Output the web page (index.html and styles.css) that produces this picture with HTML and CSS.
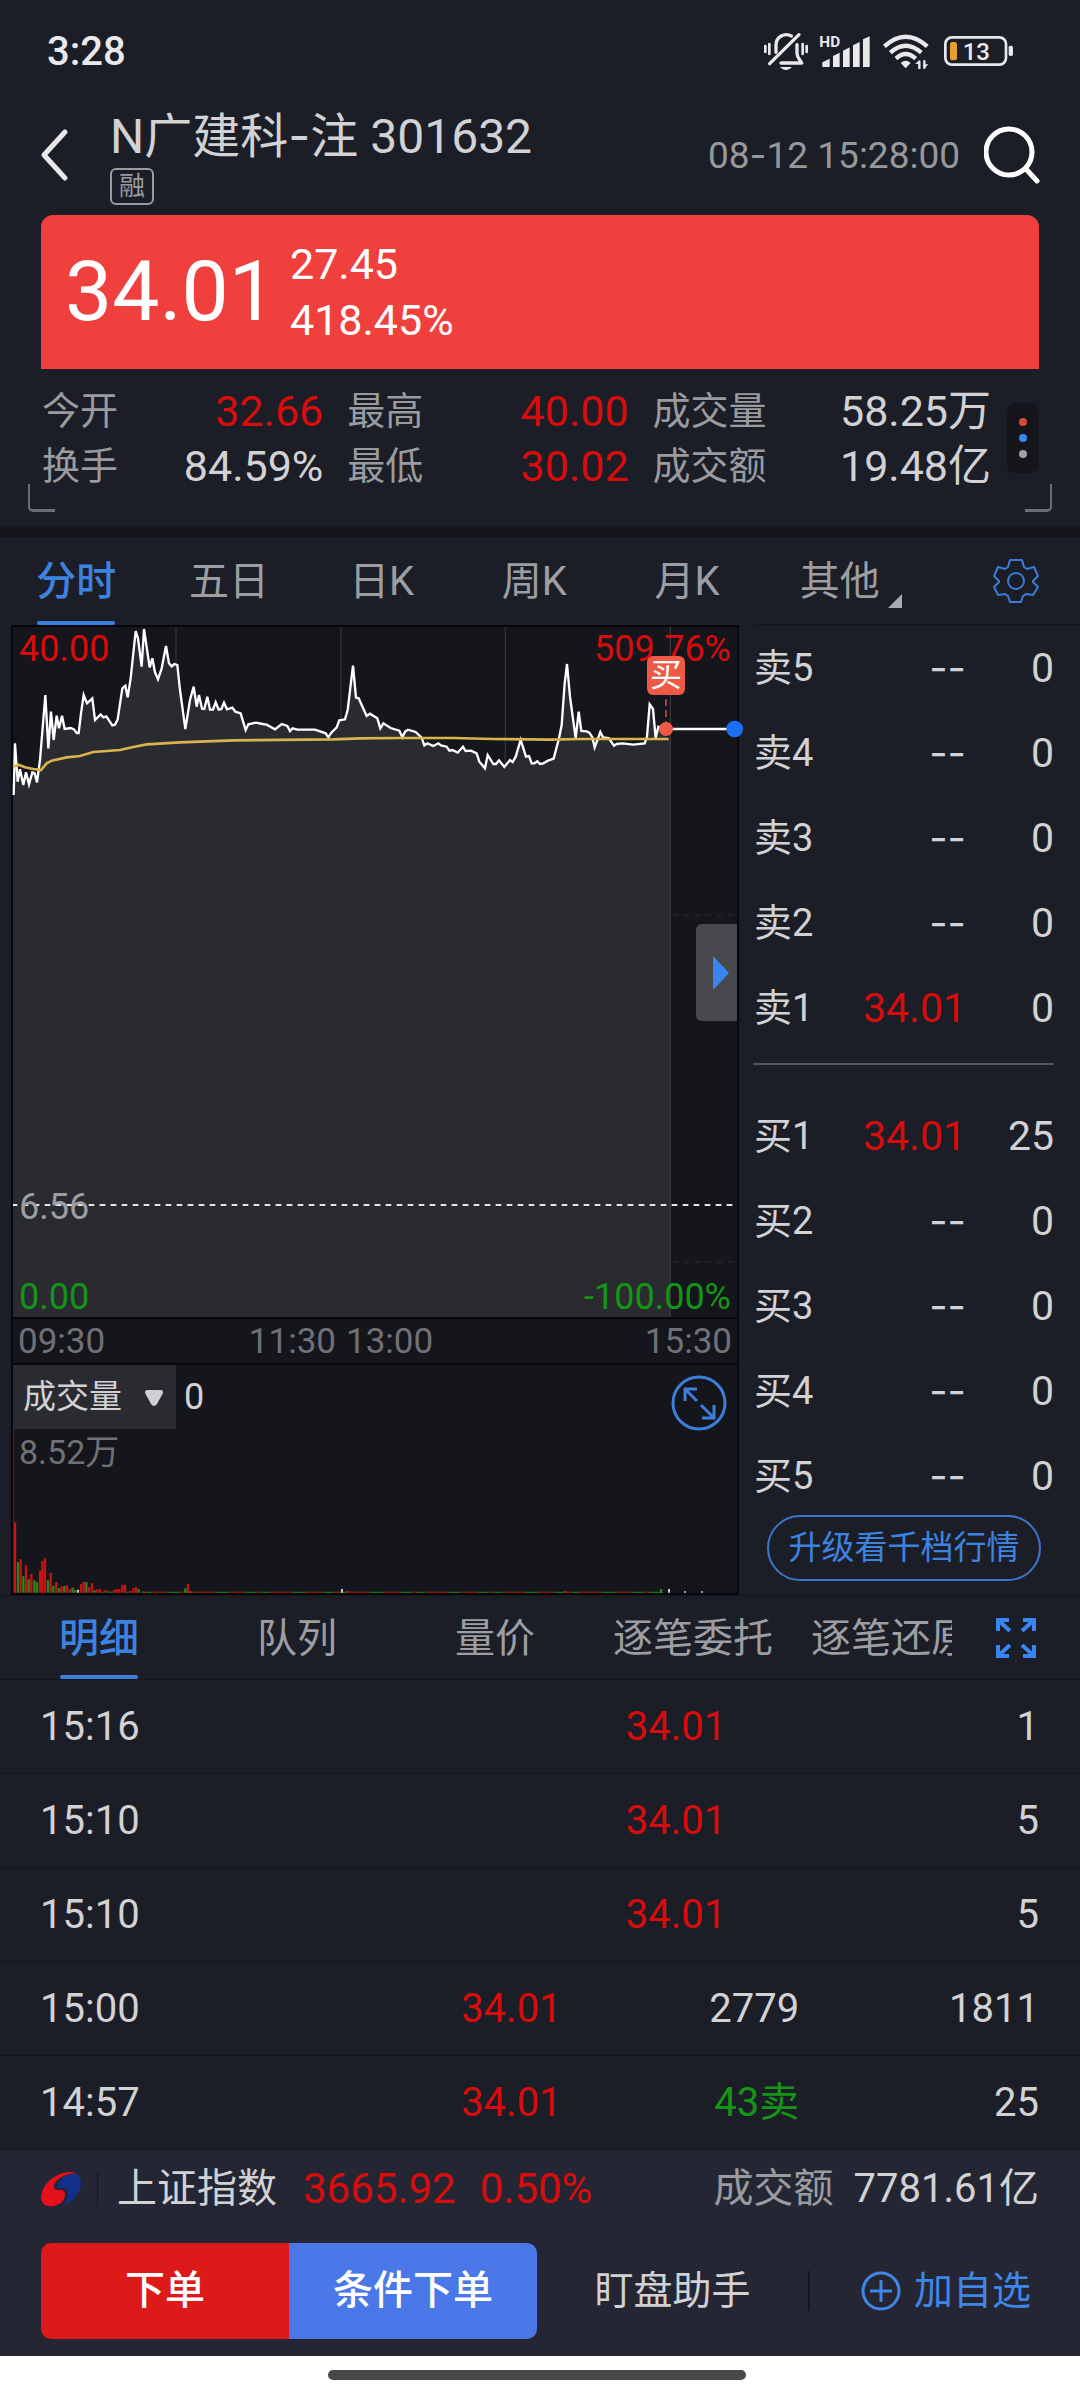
FILE: index.html
```html
<!DOCTYPE html>
<html lang="zh-CN">
<head>
<meta charset="utf-8">
<meta name="viewport" content="width=device-width, initial-scale=1">
<title>N广建科-注 301632</title>
<link rel="stylesheet" href="styles.css">
</head>
<body>
<div class="status">
  <span class="status-time">3:28</span>
  <svg class="status-icons" viewBox="45 36 750 120" aria-hidden="true">
    <g fill="none" stroke="#e9e9eb" stroke-linecap="round">
      <path d="M49 78v18M61 72v30M161 72v30M173 78v18" stroke-width="8"/>
      <path d="M62 131L150 44" stroke-width="10"/>
      <path d="M81 97V74a31 31 0 0 1 46-26M144 74v26c0 12 8 18 14 29H96" stroke-width="10" stroke-linejoin="round"/>
    </g>
    <path d="M93 141h36q-18 20-36 0z" fill="#e9e9eb"/>
    <text x="211" y="81" font-size="46" font-weight="700" fill="#e9e9eb">HD</text>
    <path d="M220 141v-14l22-11v25zM252 141v-33l20-10v43zM282 141V92l20-10v59zM312 141V76l20-10v75zM342 141V58l20-9v92z" fill="#e9e9eb"/>
    <g fill="none" stroke="#e9e9eb" stroke-width="13">
      <path d="M406 79q64-58 129 0"/>
      <path d="M424 98q46-42 93 0"/>
      <path d="M441 116q29-28 59 0"/>
      <path d="M511 122v25M526 121v25" stroke-width="7"/>
    </g>
    <path d="M455 129q15-14 30 0l-15 16zM498 132l14-12v12zM538 133l-13 13v-13z" fill="#e9e9eb"/>
    <rect x="589" y="52" width="182" height="82" rx="20" fill="none" stroke="#e9e9eb" stroke-width="8"/>
    <rect x="603" y="66" width="21" height="55" rx="7" fill="#e5a02b"/>
    <rect x="779" y="77" width="13" height="31" rx="5" fill="#e9e9eb"/>
    <text x="641" y="120" font-size="72" font-weight="500" fill="#e9e9eb">13</text>
  </svg>
</div>

<header class="head">
  <button class="icon-btn back" aria-label="返回">
    <svg width="30" height="56" viewBox="0 0 30 56"><path d="M25 5L4 28l21 23" fill="none" stroke="#e8e8ea" stroke-width="5" stroke-linecap="round" stroke-linejoin="round"/></svg>
  </button>
  <div class="head-name">
    <h1>N广建科<span class="dash">-</span>注 301632</h1>
    <span class="badge">融</span>
  </div>
  <time class="head-time">08<span class="dash">-</span>12 15:28:00</time>
  <button class="icon-btn" aria-label="搜索">
    <svg width="56" height="58" viewBox="0 0 56 58"><circle cx="25" cy="26" r="23" fill="none" stroke="#fff" stroke-width="5"/><path d="M42 43l11 12" stroke="#fff" stroke-width="5" stroke-linecap="round"/></svg>
  </button>
</header>

<section class="quote">
  <strong class="quote-price">34.01</strong>
  <div class="quote-change"><span>27.45</span><span>418.45%</span></div>
</section>

<section class="stats">
  <dl class="stats-grid">
    <div><dt>今开</dt><dd class="up">32.66</dd></div>
    <div><dt>最高</dt><dd class="up">40.00</dd></div>
    <div><dt>成交量</dt><dd>58.25万</dd></div>
    <div><dt>换手</dt><dd>84.59%</dd></div>
    <div><dt>最低</dt><dd class="up">30.02</dd></div>
    <div><dt>成交额</dt><dd>19.48亿</dd></div>
  </dl>
  <button class="more" aria-label="更多"><i class="dot dot-red"></i><i class="dot dot-blue"></i><i class="dot dot-gray"></i></button>
</section>

<nav class="tabs">
  <div class="tab-strip">
    <button class="tab active">分时</button>
    <button class="tab">五日</button>
    <button class="tab">日K</button>
    <button class="tab">周K</button>
    <button class="tab">月K</button>
    <button class="tab has-menu">其他</button>
  </div>
  <button class="icon-btn settings" aria-label="设置">
    <svg width="46" height="46" viewBox="0 0 46 46" fill="none" stroke="#3b7cd6" stroke-width="2" stroke-linejoin="round"><path d="M17 2h12l2 7 3 2 7-2 4 9-5 5 0 1 5 5-5 8-7-1-3 2-2 6H17l-2-6-3-2-7 1-4-8 5-5v-1L1 18l4-9 7 2 3-2z"/><circle cx="23" cy="23" r="8"/></svg>
  </button>
</nav>

<main class="market">
  <div class="charts">
    <div class="price-chart">
      <svg class="plot" viewBox="39 51 2172 2070" preserveAspectRatio="none" aria-hidden="true">
        <path d="M39 915H2211M39 1956H2211" stroke="#23242a" stroke-width="4" stroke-dasharray="17 16"/>
        <path d="M528 51V2121M1023 51V2121M1516 51V2121" stroke="#32333f" stroke-width="4"/>
        <path fill="#2a2b30" d="M39 2121V555L45 400 53 515 60 478 70 525 78 487 87 523 97 487 104 490 111 517 120 450 136 255 145 415 153 305 161 390 170 317 177 355 186 317 194 357 212 354 222 358 230 369 236 369 243 310 251 255 261 280 277 265 285 330 302 313 310 322 319 319 337 346 345 344 353 328 367 235 376 227 383 262 392 205 407 63 414 85 425 170 432 57 449 172 457 145 465 187 474 208 485 175 498 108 507 160 515 169 523 162 532 165 540 240 556 357 570 270 581 230 590 290 597 255 606 296 613 297 622 260 630 299 639 299 647 277 656 299 664 297 672 278 681 298 697 293 706 305 722 310 737 360 745 343 768 338 788 342 800 344 825 358 845 342 862 348 870 363 878 355 892 359 945 359 977 370 985 382 994 368 1010 352 1018 331 1035 328 1043 300 1059 167 1068 263 1076 265 1100 318 1110 311 1132 325 1141 355 1150 340 1172 354 1198 362 1207 382 1216 364 1224 359 1247 366 1265 383 1273 406 1282 400 1300 408 1315 400 1323 406 1340 410 1348 422 1357 420 1373 428 1389 410 1397 423 1413 422 1430 430 1438 455 1455 475 1463 435 1480 462 1488 462 1497 451 1513 471 1530 450 1538 456 1547 440 1562 390 1578 440 1587 438 1595 460 1603 460 1612 454 1620 462 1630 460 1644 452 1661 446 1677 385 1685 345 1694 220 1701 162 1710 260 1727 385 1736 305 1744 363 1760 364 1768 368 1777 382 1784 412 1801 366 1809 382 1826 384 1842 407 1850 402 1867 400 1900 404 1934 400 1941 380 1949 283 1959 297 1967 385 1975 350 2010 387V2121z"/>
        <path fill="none" stroke="#fff" stroke-width="7" d="M41 555L45 400 53 515 60 478 70 525 78 487 87 523 97 487 104 490 111 517 120 450 136 255 145 415 153 305 161 390 170 317 177 355 186 317 194 357 212 354 222 358 230 369 236 369 243 310 251 255 261 280 277 265 285 330 302 313 310 322 319 319 337 346 345 344 353 328 367 235 376 227 383 262 392 205 407 63 414 85 425 170 432 57 449 172 457 145 465 187 474 208 485 175 498 108 507 160 515 169 523 162 532 165 540 240 556 357 570 270 581 230 590 290 597 255 606 296 613 297 622 260 630 299 639 299 647 277 656 299 664 297 672 278 681 298 697 293 706 305 722 310 737 360 745 343 768 338 788 342 800 344 825 358 845 342 862 348 870 363 878 355 892 359 945 359 977 370 985 382 994 368 1010 352 1018 331 1035 328 1043 300 1059 167 1068 263 1076 265 1100 318 1110 311 1132 325 1141 355 1150 340 1172 354 1198 362 1207 382 1216 364 1224 359 1247 366 1265 383 1273 406 1282 400 1300 408 1315 400 1323 406 1340 410 1348 422 1357 420 1373 428 1389 410 1397 423 1413 422 1430 430 1438 455 1455 475 1463 435 1480 462 1488 462 1497 451 1513 471 1530 450 1538 456 1547 440 1562 390 1578 440 1587 438 1595 460 1603 460 1612 454 1620 462 1630 460 1644 452 1661 446 1677 385 1685 345 1694 220 1701 162 1710 260 1727 385 1736 305 1744 363 1760 364 1768 368 1777 382 1784 412 1801 366 1809 382 1826 384 1842 407 1850 402 1867 400 1900 404 1934 400 1941 380 1949 283 1959 297 1967 385 1975 350 1998 357H2204"/>
        <path d="M2011 51V2121" stroke="#36373f" stroke-width="4"/>
        <path fill="none" stroke="#d9b34c" stroke-width="8" d="M39 470L55 464 75 472 100 477 123 480 140 460 155 452 200 442 240 438 280 426 360 420 400 411 440 403 540 397 700 391 1000 388 1080 385 1200 384 1360 384 1480 387 1650 389 1740 387 2006 387"/>
        <path d="M39 1785H2211" stroke="#e6e6e8" stroke-width="6" stroke-dasharray="17 16" stroke-dashoffset="4"/>
        <path d="M1998 268V340" stroke="#c04f40" stroke-width="5" stroke-dasharray="20 13"/>
        <circle cx="1998" cy="357" r="21" fill="#ee5a45"/>
        <circle cx="2204" cy="357" r="25" fill="#1a6ff5"/>
      </svg>
      <span class="axis axis-top up">40.00</span>
      <span class="axis axis-top axis-right up">509.76%</span>
      <span class="axis axis-prev">6.56</span>
      <span class="axis axis-bottom down">0.00</span>
      <span class="axis axis-bottom axis-right down">-100.00%</span>
      <span class="buy-mark">买</span>
      <button class="drawer" aria-label="展开"><svg width="16" height="34" viewBox="0 0 16 34"><path d="M0 0l16 17L0 34z" fill="#3a86f0"/></svg></button>
    </div>
    <div class="hours">
      <div><span>09:30</span><span>11:30</span></div>
      <div><span>13:00</span><span>15:30</span></div>
    </div>
    <div class="volume">
      <svg class="plot" viewBox="15 -405 2172 684" preserveAspectRatio="none" aria-hidden="true">
        <path d="M17 -213V278" stroke="#6b1a18" stroke-width="3"/>
        <path d="M400 277H1965" stroke="#17701b" stroke-width="4"/>
        <path d="M430 277H1940" stroke="#8a1414" stroke-width="4" stroke-dasharray="50 33 17 25 66 41"/>
        <path stroke="#c41414" stroke-width="7" d="M21 278V67M38 278V178M54 278V196M70 278V222M96 278V212M103 278V183M111 278V175M128 278V218M145 278V246M161 278V259M177 278V256M186 278V267M219 278V252M227 278V246M243 278V261M252 278V249M268 278V268M276 278V268M293 278V270M318 278V270M326 278V267M334 278V267M343 278V255M351 278V255M367 278V272M376 278V264M384 278V261M408 278V274M540 278V252M549 278V273M1017 278V273M1671 278V273"/>
        <path stroke="#2c8420" stroke-width="7" d="M30 278V187M46 278V229M62 278V238M79 278V241M87 278V247M120 278V241M136 278V257M153 278V264M169 278V258M194 278V263M202 278V270M235 278V246M260 278V271M285 278V275M301 278V274M310 278V275M359 278V275M392 278V267M532 278V265M1959 278V267"/>
        <path stroke="#c8c8ca" stroke-width="6" d="M210 278V269M1002 278V267M1983 278V267M2031 278V274M2082 278V274"/>
      </svg>
      <div class="volume-head">
        <label class="picker">
          <select aria-label="指标"><option>成交量</option></select>
          <svg width="18" height="16" viewBox="0 0 18 16"><path d="M2 0h14q2 0 2 3l-6 11q-3 4-6 0L0 3q0-3 2-3z" fill="#cfcfd1"/></svg>
        </label>
        <span class="volume-value">0</span>
        <button class="icon-btn zoom" aria-label="放大">
          <svg width="56" height="56" viewBox="0 0 56 56" fill="none" stroke="#3d7edb" stroke-width="3"><circle cx="28" cy="28" r="26"/><path d="M14 26V14h12M15 15l11 11M30 30l12 12M43 30v13H31"/></svg>
        </button>
      </div>
      <span class="volume-max">8.52万</span>
    </div>
  </div>

  <aside class="book">
    <table>
      <tr><th>卖5</th><td class="dash">--</td><td>0</td></tr>
      <tr><th>卖4</th><td class="dash">--</td><td>0</td></tr>
      <tr><th>卖3</th><td class="dash">--</td><td>0</td></tr>
      <tr><th>卖2</th><td class="dash">--</td><td>0</td></tr>
      <tr><th>卖1</th><td class="up">34.01</td><td>0</td></tr>
    </table>
    <hr>
    <table>
      <tr><th>买1</th><td class="up">34.01</td><td>25</td></tr>
      <tr><th>买2</th><td class="dash">--</td><td>0</td></tr>
      <tr><th>买3</th><td class="dash">--</td><td>0</td></tr>
      <tr><th>买4</th><td class="dash">--</td><td>0</td></tr>
      <tr><th>买5</th><td class="dash">--</td><td>0</td></tr>
    </table>
    <button class="upgrade">升级看千档行情</button>
  </aside>
</main>

<nav class="tabs detail-tabs">
  <div class="tab-strip">
    <button class="tab active">明细</button>
    <button class="tab">队列</button>
    <button class="tab">量价</button>
    <button class="tab">逐笔委托</button>
    <button class="tab">逐笔还原</button>
  </div>
  <button class="icon-btn expand" aria-label="全屏">
    <svg width="40" height="40" viewBox="0 0 40 40" fill="none" stroke="#3a86f0" stroke-width="4"><path d="M2 13V2h11M2 2l12 11M27 2h11v11M38 2L26 13M2 27v11h11M2 38l12-11M38 27v11H27M38 38L26 27"/></svg>
  </button>
</nav>

<table class="ticks">
  <colgroup><col class="c-time"><col class="c-price"><col class="c-vol"><col class="c-count"></colgroup>
  <tr><th>15:16</th><td class="up mid" colspan="2">34.01</td><td>1</td></tr>
  <tr><th>15:10</th><td class="up mid" colspan="2">34.01</td><td>5</td></tr>
  <tr><th>15:10</th><td class="up mid" colspan="2">34.01</td><td>5</td></tr>
  <tr><th>15:00</th><td class="up">34.01</td><td>2779</td><td>1811</td></tr>
  <tr><th>14:57</th><td class="up">34.01</td><td class="down">43卖</td><td>25</td></tr>
</table>

<footer class="foot">
  <div class="index">
    <svg width="40" height="36" viewBox="0 0 40 36" aria-hidden="true"><path d="M36 3C24-3 2 8 0 26c0 7 5 10 12 9 8-1 12-6 12-12 0-3-3-5-7-4-3 0-5-1-4-5C16 7 26 2 36 3z" fill="#e60f1e"/><path d="M36 3c6 5 5 15-1 22-3 4-8 8-13 9 3-3 5-7 5-12 0-4-3-6-7-5-2 0-3 0-4-1C17 8 27 2 36 3z" fill="#11308c"/></svg>
    <span class="index-name">上证指数</span>
    <span class="up">3665.92</span>
    <span class="up">0.50%</span>
    <span class="index-label">成交额</span>
    <span>7781.61亿</span>
  </div>
  <div class="actions">
    <button class="order">下单</button>
    <button class="order cond">条件下单</button>
    <button class="helper">盯盘助手</button>
    <button class="watch">
      <svg width="40" height="40" viewBox="0 0 40 40" fill="none" stroke="#3f86e8" stroke-width="3"><circle cx="20" cy="20" r="18"/><path d="M9 20h22M20 9v22"/></svg>
      加自选
    </button>
  </div>
</footer>
<div class="home"><span></span></div>
</body>
</html>
```
FILE: styles.css
```css
* { box-sizing: border-box; }

body {
  margin: 0;
  display: flex;
  flex-direction: column;
  min-height: 100vh;
  background: #1b1e27;
  color: #d2d2d4;
  font: 400 40px/48px Roboto, "Noto Sans CJK SC", sans-serif;
}

button {
  margin: 0;
  padding: 0;
  border: 0;
  background: none;
  color: inherit;
  font: inherit;
  white-space: nowrap;
}

svg { display: block; }
table { width: 100%; border-collapse: separate; border-spacing: 0; table-layout: fixed; }
th, td { padding: 0; font-weight: 400; text-align: right; }
th { text-align: left; }

.up { color: #d80c0c; }
.down { color: #149614; }
.dash { font-family: Inter, Roboto, sans-serif; }
.icon-btn { display: flex; align-items: center; justify-content: center; }

/* Status bar */
.status {
  display: flex;
  align-items: center;
  justify-content: space-between;
  height: 104px;
  padding: 0 66px 0 47px;
}
.status-time { font-weight: 500; color: #e9e9eb; }
.status-icons { width: 250px; height: 40px; }

/* Title row */
.head {
  display: flex;
  align-items: center;
  height: 111px;
  padding: 0 40px 9px;
}
.back { margin-right: 40px; }
.head-name { flex: 1; }
.head h1 { margin: 0; font-size: 48px; font-weight: 400; line-height: 60px; }
.badge {
  display: block;
  width: 44px;
  height: 37px;
  margin-top: 1px;
  border: 2px solid #9a9b9f;
  border-radius: 6px;
  color: #9a9b9f;
  font-size: 26px;
  line-height: 33px;
  text-align: center;
}
.head-time { margin-right: 24px; color: #97989c; font-size: 37px; }

/* Price banner */
.quote {
  display: flex;
  align-items: center;
  gap: 14px;
  height: 154px;
  margin: 0 41px;
  padding: 0 24px;
  border-radius: 12px 12px 0 0;
  background: #ef403e;
  color: #fff;
}
.quote-price { font-size: 84px; font-weight: 400; line-height: 96px; }
.quote-change { display: grid; font-size: 43px; line-height: 56px; }

/* Key figures */
.stats {
  position: relative;
  display: flex;
  align-items: center;
  gap: 16px;
  height: 168px;
  padding: 0 41px 0 42px;
  border-bottom: 11px solid #15161b;
}
.stats::before, .stats::after {
  content: "";
  position: absolute;
  bottom: 14px;
  width: 25px;
  height: 25px;
  border-bottom: 3px solid #6c6d72;
}
.stats::before { left: 28px; border-left: 2px solid #6c6d72; border-bottom-left-radius: 5px; }
.stats::after { right: 28px; border-right: 2px solid #6c6d72; border-bottom-right-radius: 5px; }
.stats-grid {
  flex: 1;
  display: grid;
  grid-template-columns: 281fr 281fr 338fr;
  column-gap: 24px;
  margin: 0 0 17px;
}
.stats-grid div { display: flex; justify-content: space-between; line-height: 55px; }
.stats-grid dt { color: #9a9b9f; font-size: 38px; }
.stats-grid dd { margin: 0; font-size: 43px; }
.more {
  display: flex;
  flex-direction: column;
  align-items: center;
  justify-content: center;
  gap: 8px;
  width: 32px;
  height: 70px;
  margin-bottom: 19px;
  border-radius: 8px;
  background: #15161b;
}
.dot { width: 8px; height: 8px; border-radius: 50%; }
.dot-red { background: #d64a36; }
.dot-blue { background: #3a86f0; }
.dot-gray { background: #a0a0a2; }

/* Tabs */
.tabs { display: flex; height: 88px; color: #9d9ea2; }
.tab-strip { flex: 1; display: flex; padding-right: 36px; overflow: hidden; }
.tab { position: relative; flex: 1 0 0; padding-top: 2px; }
.tab.active { color: #3e82e0; font-weight: 500; }
.tab.active::after {
  content: "";
  position: absolute;
  left: 50%;
  bottom: 0;
  width: 78px;
  height: 4px;
  margin-left: -39px;
  border-radius: 2px;
  background: #3e7edb;
}
.has-menu::after {
  content: "";
  position: absolute;
  right: 14px;
  bottom: 17px;
  border: 7px solid #a9aaad;
  border-top-color: transparent;
  border-left-color: transparent;
}
.settings, .expand { width: 128px; }
.detail-tabs { height: 85px; border-top: 1px solid #14161d; border-bottom: 1px solid #14161d; }
.detail-tabs .tab-strip { padding: 0; }
.detail-tabs .tab { flex: 0 0 198px; }

/* Charts and order book */
.market {
  display: grid;
  grid-template-columns: minmax(0, 1fr) 326px;
  column-gap: 15px;
  padding-left: 11px;
}
.charts > * { border: 2px solid #06070c; background: #15161b; }
.price-chart { position: relative; height: 694px; }
.plot { position: absolute; inset: 0; width: 100%; height: 100%; overflow: visible; }
.axis { position: absolute; left: 6px; font-size: 36px; line-height: 42px; }
.axis-top { top: 1px; }
.axis-right { left: auto; right: 6px; }
.axis-prev { top: 559px; color: #9d9ea2; }
.axis-bottom { bottom: -1px; }
.buy-mark {
  position: absolute;
  top: 29px;
  right: 52px;
  width: 38px;
  height: 39px;
  border-radius: 6px;
  background: #ee5a45;
  color: #fff;
  font-size: 32px;
  line-height: 38px;
  text-align: center;
}
.drawer {
  position: absolute;
  top: 297px;
  right: 0;
  display: flex;
  align-items: center;
  justify-content: center;
  width: 41px;
  height: 97px;
  padding-left: 8px;
  border-radius: 6px 0 0 6px;
  background: #48494d;
}
.charts .hours {
  display: grid;
  grid-template-columns: 328fr 396fr;
  height: 44px;
  border-top: 0;
  border-bottom: 0;
  color: #707176;
  font-size: 35px;
  line-height: 46px;
}
.hours div { display: flex; justify-content: space-between; padding: 0 5px; }
.volume { position: relative; height: 232px; }
.volume-head { position: relative; display: flex; align-items: flex-start; }
.picker { position: relative; display: flex; }
.picker select {
  width: 163px;
  height: 64px;
  padding: 0 0 0 10px;
  border: 0;
  border-radius: 0;
  appearance: none;
  background: #2a2b30;
  color: #d2d2d4;
  font: 400 33px/64px Roboto, "Noto Sans CJK SC", sans-serif;
}
.picker svg { position: absolute; right: 13px; top: 25px; pointer-events: none; }
.volume-value { flex: 1; padding-left: 8px; font-size: 36px; line-height: 64px; }
.zoom { margin: 10px 10px 0 0; }
.volume-max { position: relative; display: block; padding-left: 6px; color: #707176; font-size: 34px; line-height: 42px; }

.book { padding-right: 26px; box-shadow: 0 -1px #14161d; }
.book tr { height: 85px; }
.book th { width: 80px; font-size: 38px; }
.book td:last-child { width: 88px; }
.book .up, .book td:last-child { font-size: 41px; }
.book hr { height: 2px; margin: 13px 0 28px -1px; border: 0; background: #55565e; }
.upgrade {
  display: block;
  width: 274px;
  height: 66px;
  margin: -3px auto 0;
  border: 2px solid #3b76cc;
  border-radius: 33px;
  color: #3e82e0;
  font-size: 33px;
}

/* Trade ticks */
.ticks tr { height: 94px; }
.ticks th, .ticks td { border-bottom: 1px solid #14161d; }
.ticks th { padding-left: 40px; }
.ticks td:last-child { padding-right: 41px; }
.ticks .mid { padding-right: 73px; }
.c-time { width: 30%; }
.c-price { width: 22%; }
.c-vol { width: 22%; }
.c-count { width: 26%; }

/* Footer */
.foot { margin-top: auto; padding: 0 41px 17px; background: #242733; }
.index { display: flex; align-items: center; height: 78px; }
.index-name { margin: 0 26px 0 16px; padding-left: 20px; background: linear-gradient(#15161b, #15161b) 0 50% / 1px 34px no-repeat; }
.index .up { font-size: 42px; }
.index .up + .up { margin-left: 24px; }
.index-label { margin-left: auto; margin-right: 20px; color: #9a9b9f; }
.actions { display: flex; align-items: center; margin-top: 15px; }
.order {
  flex: 0 1 248px;
  height: 96px;
  border-radius: 10px 0 0 10px;
  background: #dc1a1a;
  color: #fff;
  font-weight: 500;
}
.cond { border-radius: 0 10px 10px 0; background: #4a78e8; }
.helper { flex: 1; border-right: 2px solid #15161b; font-size: 39px; line-height: 40px; }
.watch {
  display: flex;
  align-items: center;
  gap: 13px;
  padding: 0 8px 0 51px;
  color: #3f86e8;
  font-size: 39px;
}

/* Gesture bar */
.home { display: flex; justify-content: center; height: 44px; padding: 14px 6px 0 0; background: #fff; }
.home span { width: 418px; height: 10px; border-radius: 5px; background: #484848; }
```
